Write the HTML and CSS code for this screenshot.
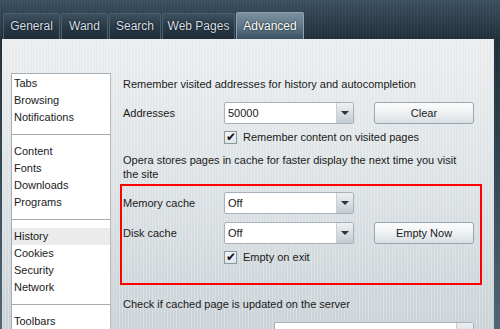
FILE: index.html
```html
<!DOCTYPE html>
<html lang="en">

<head>
  <meta charset="UTF-8" />
  <title>Preferences - Advanced</title>
  <link rel="stylesheet" href="styles.css">
</head>

<body>

  <!-- Tab strip -->
  <div class="tabs">
    <div class="tab">General</div>
    <div class="tab">Wand</div>
    <div class="tab">Search</div>
    <div class="tab">Web Pages</div>
    <div class="tab active">Advanced</div>
  </div>

  <!-- Advanced panel -->
  <div class="panel">
    <ul class="sidebar">
      <li>Tabs</li>
      <li>Browsing</li>
      <li>Notifications</li>
      <li class="sep"></li>
      <li>Content</li>
      <li>Fonts</li>
      <li>Downloads</li>
      <li>Programs</li>
      <li class="sep"></li>
      <li class="selected">History</li>
      <li>Cookies</li>
      <li>Security</li>
      <li>Network</li>
      <li class="sep"></li>
      <li>Toolbars</li>
    </ul>

    <div class="content">
      <p class="info">Remember visited addresses for history and autocompletion</p>
      <div class="row">
        <span class="label">Addresses</span>
        <div class="select"><span>50000</span><i class="arrow"></i></div>
        <button class="btn">Clear</button>
      </div>
      <label class="check"><span class="box">&#10004;</span>Remember content on visited pages</label>

      <p class="info two">Opera stores pages in cache for faster display the next time you visit<br>the site</p>

      <div class="highlight">
        <div class="row">
          <span class="label">Memory cache</span>
          <div class="select"><span>Off</span><i class="arrow"></i></div>
        </div>
        <div class="row">
          <span class="label">Disk cache</span>
          <div class="select"><span>Off</span><i class="arrow"></i></div>
          <button class="btn">Empty Now</button>
        </div>
        <label class="check"><span class="box">&#10004;</span>Empty on exit</label>
      </div>

      <p class="info three">Check if cached page is updated on the server</p>
      <div class="row last">
        <span class="label"></span>
        <div class="select long"><span></span><i class="arrow"></i></div>
      </div>
    </div>
  </div>

</body>

</html>
```

FILE: styles.css
```css
* {
  margin: 0;
  padding: 0;
  box-sizing: border-box;
}

html,
body {
  height: 100%;
  overflow: hidden;
}

body {
  font-family: "Liberation Sans", Arial, sans-serif;
  font-size: 11px;
  color: #1a1a1a;
  background:
    repeating-linear-gradient(90deg, rgba(255, 255, 255, 0.04) 0 1px, transparent 1px 3px),
    linear-gradient(#3b4f5f 0, #1f2d39 40px, #2a3b48 120px, #4d6474 329px);
}

/* tabs */
.tabs {
  display: flex;
  align-items: flex-end;
  height: 39px;
  padding-left: 3px;
}

.tab {
  height: 26px;
  line-height: 25px;
  margin-right: 1px;
  font-size: 12px;
  text-align: center;
  white-space: nowrap;
  color: #d5dfe6;
  border: 1px solid #4a5f6e;
  border-bottom: none;
  border-radius: 2px 2px 0 0;
  background: linear-gradient(#3d5161, #2a3b48 50%, #1e2c37);
  text-shadow: 0 0 2px #000;
}

.tab:nth-child(1) { width: 57px; }
.tab:nth-child(2) { width: 47px; }
.tab:nth-child(3) { width: 52px; }
.tab:nth-child(4) { width: 73px; }

.tab.active {
  width: 68px;
  height: 27px;
  line-height: 27px;
  color: #fff;
  border-color: #8ea3b2;
  background: linear-gradient(#7a909f, #5e7585 55%, #3c5161);
}

/* panel */
.panel {
  display: flex;
  align-items: flex-start;
  height: 300px;
  margin: 0 6px 0 2px;
  padding: 34px 0 0 9px;
  background:
    repeating-linear-gradient(90deg, rgba(255, 255, 255, 0.25) 0 1px, transparent 1px 3px),
    linear-gradient(#eaedef, #dde2e5 140px, #c9d1d6);
}

.sidebar {
  list-style: none;
  width: 100px;
  height: 270px;
  padding-top: 1px;
  background: #fff;
  border: 1px solid #a7b0b7;
  border-right-color: #b6bec4;
}

.sidebar li {
  height: 17px;
  line-height: 17px;
  padding-left: 2px;
}

.sidebar li.selected {
  background: #ebebeb;
}

.sidebar li.sep {
  position: relative;
}

.sidebar li.sep::after {
  content: "";
  position: absolute;
  left: 0;
  right: 0;
  top: 8px;
  border-top: 1px solid #a9a9a9;
}

.content {
  margin-left: 12px;
  padding-top: 4px;
}

.info {
  line-height: 14px;
}

.info.two {
  margin-top: 9px;
}

.info.three {
  margin-top: 12px;
}

.row {
  display: flex;
  align-items: center;
  margin-top: 11px;
}

.label {
  width: 101px;
}

.select {
  display: flex;
  width: 130px;
  height: 22px;
  background: #fff;
  border: 1px solid #a6b1b9;
  border-radius: 2px;
}

.select span {
  flex: 1;
  padding-left: 3px;
  line-height: 20px;
}

.select.long {
  width: 200px;
  margin-left: 50px;
}

.arrow {
  width: 17px;
  position: relative;
  border-left: 1px solid #c8d0d5;
  background: linear-gradient(#eef1f3, #c3ccd2);
}

.arrow::after {
  content: "";
  position: absolute;
  left: 4px;
  top: 8px;
  border: 4px solid transparent;
  border-top: 4px solid #333;
  border-bottom: none;
}

.btn {
  width: 100px;
  height: 22px;
  margin-left: 20px;
  font-family: inherit;
  font-size: 11px;
  color: #1a1a1a;
  border: 1px solid #9aa7b0;
  border-radius: 3px;
  background: linear-gradient(#fbfcfc, #eef1f3 50%, #d7dee2);
}

.check {
  display: flex;
  align-items: center;
  height: 14px;
  margin: 6px 0 0 101px;
}

.box {
  width: 13px;
  height: 13px;
  margin-right: 6px;
  border: 1px solid #8a98a2;
  background: linear-gradient(#f4f6f7, #dfe4e7);
  font-size: 12px;
  line-height: 11px;
  text-align: center;
  color: #111;
}

.highlight {
  width: 362px;
  height: 101px;
  margin: 3px 0 0 -3px;
  padding-left: 1px;
  border: 2px solid #f00;
}

.highlight .row {
  margin-top: 6px;
}

.highlight .row + .row {
  margin-top: 8px;
}

.row.last {
  margin-top: 11px;
}
```
